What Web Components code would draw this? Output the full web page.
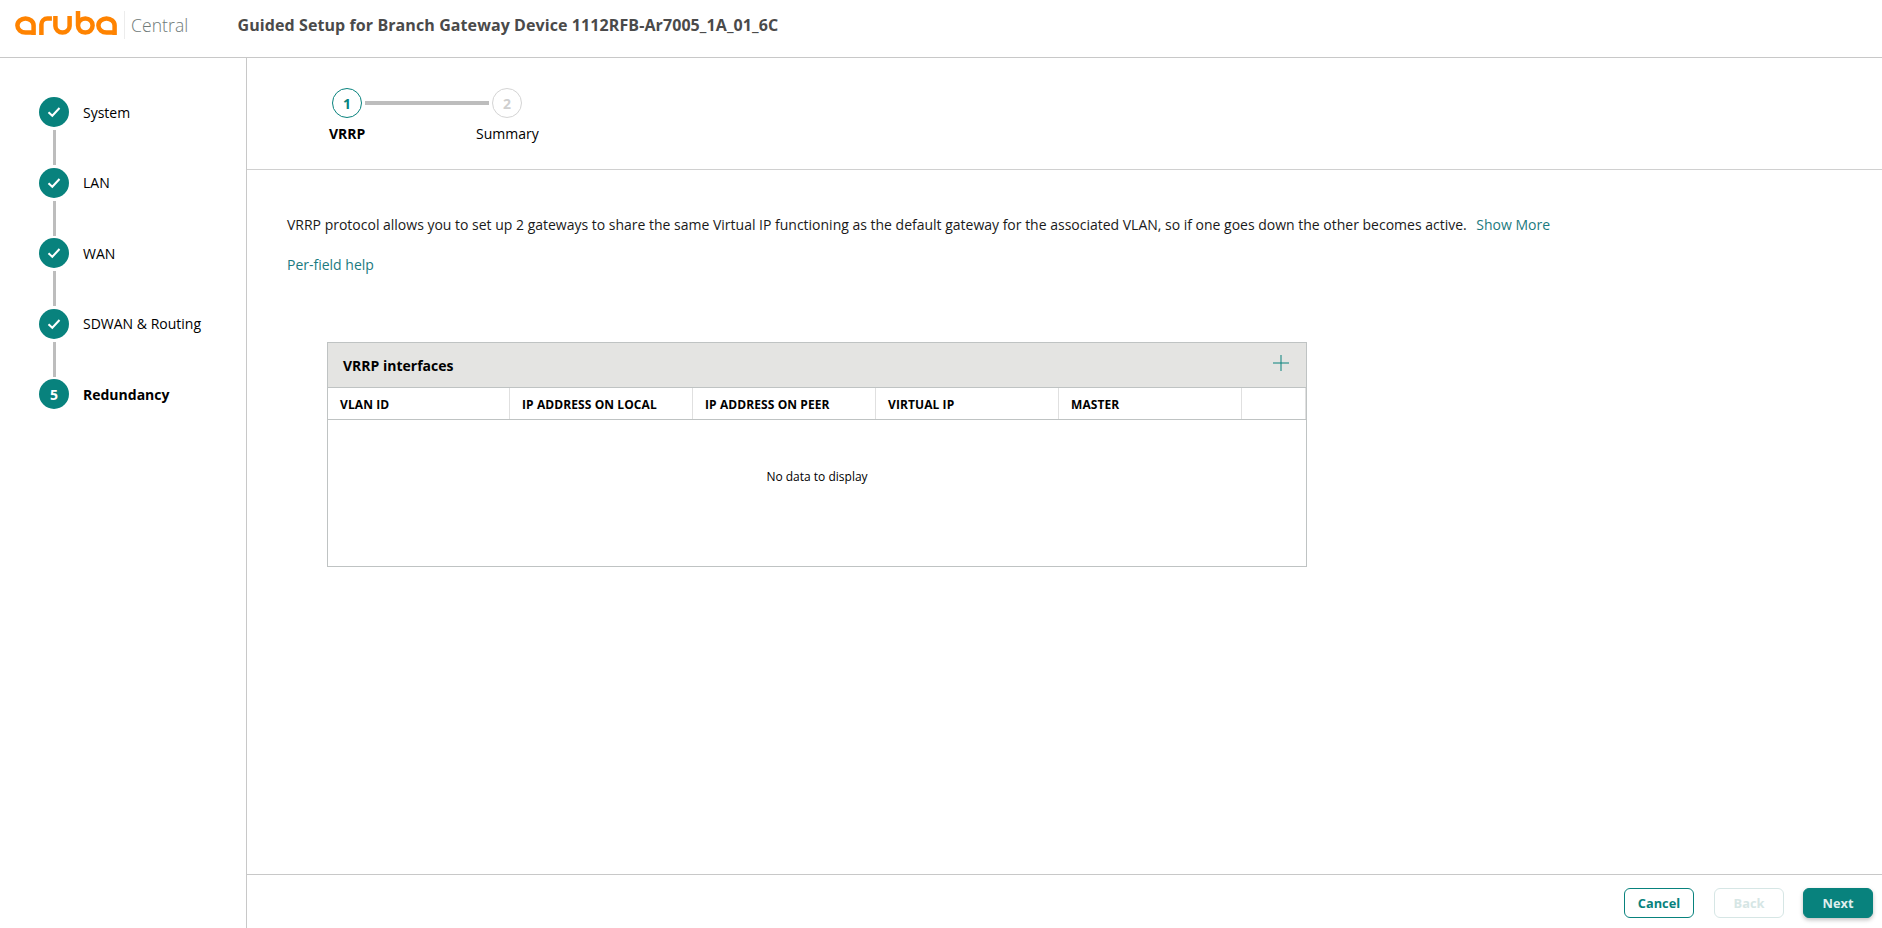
<!DOCTYPE html>
<html>
<head>
<meta charset="utf-8">
<title>Guided Setup</title>
<style>
  html, body { height: 100%; margin: 0; }
  body {
    font-family: "Open Sans", "Liberation Sans", sans-serif;
    font-size: 14px;
    color: #000;
    background: #fff;
  }
</style>
</head>
<body>
<setup-app>
  <setup-header slot="header" title-text="Guided Setup for Branch Gateway Device 1112RFB-Ar7005_1A_01_6C"></setup-header>
  <setup-sidebar slot="sidebar">
    <side-step state="done" connector>System</side-step>
    <side-step state="done" connector>LAN</side-step>
    <side-step state="done" connector>WAN</side-step>
    <side-step state="done" connector>SDWAN &amp; Routing</side-step>
    <side-step state="active" number="5">Redundancy</side-step>
  </setup-sidebar>
  <top-stepper slot="stepper"></top-stepper>
  <div slot="content">
    <help-text></help-text>
    <vrrp-table></vrrp-table>
  </div>
  <setup-footer slot="footer"></setup-footer>
</setup-app>

<script>
const TEAL = '#08827d';

class SetupApp extends HTMLElement {
  constructor() {
    super();
    this.attachShadow({ mode: 'open' }).innerHTML = `
      <style>
        :host { display: flex; flex-direction: column; height: 928px; overflow: hidden; }
        .body { flex: 1; display: flex; min-height: 0; }
        aside { width: 246px; flex: none; border-right: 1px solid #c8c8c8; }
        main { flex: 1; display: flex; flex-direction: column; min-width: 0; }
        .stepper { height: 111px; flex: none; border-bottom: 1px solid #d0d0d0; }
        .content { flex: 1; min-height: 0; }
        .footer { height: 53px; flex: none; border-top: 1px solid #c8c8c8; }
      </style>
      <slot name="header"></slot>
      <div class="body">
        <aside><slot name="sidebar"></slot></aside>
        <main>
          <div class="stepper"><slot name="stepper"></slot></div>
          <div class="content"><slot name="content"></slot></div>
          <div class="footer"><slot name="footer"></slot></div>
        </main>
      </div>
    `;
  }
}

class SetupHeader extends HTMLElement {
  constructor() {
    super();
    this.attachShadow({ mode: 'open' }).innerHTML = `
      <style>
        :host { display: flex; align-items: center; height: 50px; padding-bottom: 7px; border-bottom: 1px solid #c8c8c8; flex: none; }
        svg { display: block; margin: 0 0 4px 15px; flex: none; }
        .sep { width: 1px; height: 28px; background: #ececec; margin-left: 6px; }
        .central { font-size: 17.5px; font-weight: 300; color: #6f7a78; margin-left: 6px; width: 106.5px; letter-spacing: .1px; }
        h1 { margin: 0; font-size: 16px; font-weight: 700; color: #4a4a4a; white-space: nowrap; letter-spacing: .09px; }
      </style>
      <svg width="103" height="26" viewBox="0 0 103 26" fill="none" stroke="#ff8300" stroke-width="4.5">
        <path d="M18.6 25V15.5a8.1 7.1 0 1 0-8.1 7.1h8.1"/>
        <path d="M26.4 25V14.5a6 6 0 0 1 6-6h4.5"/>
        <path d="M40.4 6v10a7.1 6.6 0 0 0 14.2 0V6"/>
        <path d="M63 1v14.5a7.3 7.1 0 1 0 7.3-7.1a7.3 7.1 0 0 0-7.3 7.1"/>
        <path d="M99.6 25V15.5a8.1 7.1 0 1 0-8.1 7.1h8.1"/>
      </svg>
      <div class="sep"></div>
      <div class="central">Central</div>
      <h1></h1>
    `;
    this.shadowRoot.querySelector('h1').textContent = this.getAttribute('title-text');
  }
}

class SetupSidebar extends HTMLElement {
  constructor() {
    super();
    this.attachShadow({ mode: 'open' }).innerHTML = `
      <style>
        :host { display: flex; flex-direction: column; padding: 39px 0 0 39px; }
      </style>
      <slot></slot>
    `;
  }
}

class SideStep extends HTMLElement {
  constructor() {
    super();
    const done = this.getAttribute('state') === 'done';
    const mark = done
      ? `<svg width="14" height="12" viewBox="0 0 14 12" fill="none" stroke="#fff" stroke-width="2"><path d="M1.5 6.2l3.8 3.6L12.5 2"/></svg>`
      : this.getAttribute('number');
    this.attachShadow({ mode: 'open' }).innerHTML = `
      <style>
        :host { display: block; height: 70.5px; position: relative; }
        :host([state="active"]) .label { font-weight: 700; }
        .row { display: flex; align-items: center; height: 30px; }
        .dot {
          width: 30px; height: 30px; border-radius: 50%; background: ${TEAL}; color: #fff;
          display: flex; align-items: center; justify-content: center;
          font-weight: 700; font-size: 14px; flex: none;
        }
        .label { margin-left: 14px; font-size: 14px; }
        .line { width: 3px; height: 35px; background: #bdbdbd; margin: 3px 0 0 14px; }
      </style>
      <div class="row"><div class="dot">${mark}</div><div class="label"><slot></slot></div></div>
      ${this.hasAttribute('connector') ? '<div class="line"></div>' : ''}
    `;
  }
}

class TopStepper extends HTMLElement {
  constructor() {
    super();
    this.attachShadow({ mode: 'open' }).innerHTML = `
      <style>
        :host { display: block; padding: 30px 0 0 85px; }
        .track { display: flex; align-items: center; }
        .circle {
          width: 30px; height: 30px; box-sizing: border-box; border-radius: 50%;
          display: flex; align-items: center; justify-content: center;
          font-weight: 700; font-size: 14px; background: #fff; flex: none;
        }
        .on { border: 1px solid ${TEAL}; color: ${TEAL}; }
        .off { border: 1px solid #d4d4d4; color: #cfcfcf; }
        .bar { width: 124px; height: 4px; background: #bdbdbd; margin: 0 3px; }
        .labels { display: flex; margin: 6px 0 0 -3px; font-size: 14px; line-height: 20px; }
        .labels b { width: 147px; }
      </style>
      <div class="track">
        <div class="circle on">1</div>
        <div class="bar"></div>
        <div class="circle off">2</div>
      </div>
      <div class="labels"><b>VRRP</b><span>Summary</span></div>
    `;
  }
}

class HelpText extends HTMLElement {
  constructor() {
    super();
    this.attachShadow({ mode: 'open' }).innerHTML = `
      <style>
        :host { display: block; padding: 45px 0 0 40px; font-size: 14px; line-height: 20px; color: #1a1a1a; letter-spacing: -.005px; }
        a { color: #1b7a80; text-decoration: none; }
        .more { margin-left: 6px; }
        p { margin: 0; }
        .field { margin-top: 20px; }
      </style>
      <p>VRRP protocol allows you to set up 2 gateways to share the same Virtual IP functioning as the default gateway for the associated VLAN, so if one goes down the other becomes active. <a class="more" href="#">Show More</a></p>
      <p class="field"><a href="#">Per-field help</a></p>
    `;
  }
}

class VrrpTable extends HTMLElement {
  constructor() {
    super();
    const cols = ['VLAN ID', 'IP ADDRESS ON LOCAL', 'IP ADDRESS ON PEER', 'VIRTUAL IP', 'MASTER', ''];
    this.attachShadow({ mode: 'open' }).innerHTML = `
      <style>
        :host {
          display: block; width: 980px; height: 225px; box-sizing: border-box; margin: 67px 0 0 80px;
          border: 1px solid #bfc3c3;
        }
        .title {
          display: flex; align-items: center; justify-content: space-between;
          height: 44px; background: #e4e4e2; border-bottom: 1px solid #bfc3c3;
          padding: 0 17px 0 15px; font-weight: 700; font-size: 14px;
        }
        .title svg { display: block; margin-top: -4px; }
        .head {
          display: grid; grid-template-columns: 182px repeat(4, 183px) 1fr; height: 31px;
          border-bottom: 1px solid #bfc3c3; font-weight: 700; font-size: 12px; letter-spacing: .09px;
        }
        .head div {
          display: flex; align-items: center; padding: 2px 0 0 12px;
          border-right: 1px solid #e0e0e0; box-sizing: border-box; white-space: nowrap;
        }
        .empty { text-align: center; font-size: 12px; padding-top: 49px; line-height: 16px; }
      </style>
      <div class="title">
        <span>VRRP interfaces</span>
        <svg width="16" height="16" viewBox="0 0 16 16" stroke="${TEAL}" stroke-width="1" fill="none"><path d="M8 0v16M0 8h16"/></svg>
      </div>
      <div class="head">${cols.map(c => `<div>${c}</div>`).join('')}</div>
      <div class="empty">No data to display</div>
    `;
  }
}

class SetupFooter extends HTMLElement {
  constructor() {
    super();
    this.attachShadow({ mode: 'open' }).innerHTML = `
      <style>
        :host { display: flex; justify-content: flex-end; padding: 13px 9px 0 0; }
        .back { margin: 0 19px 0 20px; }
      </style>
      <wiz-button variant="outline">Cancel</wiz-button>
      <wiz-button class="back" variant="disabled">Back</wiz-button>
      <wiz-button variant="primary">Next</wiz-button>
    `;
  }
}

class WizButton extends HTMLElement {
  constructor() {
    super();
    this.attachShadow({ mode: 'open' }).innerHTML = `
      <style>
        :host { display: block; flex: none; }
        button {
          display: block; width: 70px; height: 30px; box-sizing: border-box; border-radius: 6px; padding: 0;
          font: 700 12.8px "Open Sans", "Liberation Sans", sans-serif; background: #fff;
          border: 1px solid ${TEAL}; color: ${TEAL};
        }
        :host([variant="primary"]) button { background: ${TEAL}; color: #dfeeed; box-shadow: 0 2px 4px rgba(0,0,0,.25); }
        :host([variant="disabled"]) button { border-color: #d6e6e5; color: #d6e6e5; }
      </style>
      <button><slot></slot></button>
    `;
  }
}

customElements.define('setup-app', SetupApp);
customElements.define('setup-header', SetupHeader);
customElements.define('setup-sidebar', SetupSidebar);
customElements.define('side-step', SideStep);
customElements.define('top-stepper', TopStepper);
customElements.define('help-text', HelpText);
customElements.define('vrrp-table', VrrpTable);
customElements.define('setup-footer', SetupFooter);
customElements.define('wiz-button', WizButton);
</script>
</body>
</html>
